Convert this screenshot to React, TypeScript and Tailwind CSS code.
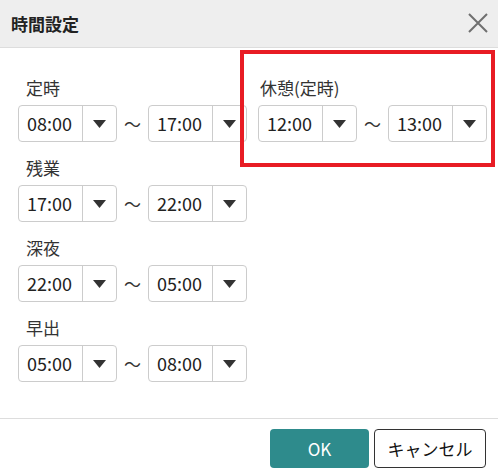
import React from 'react'

const font = { fontFamily: '"Noto Sans CJK JP", "Noto Sans", sans-serif' }

interface Range {
  from: string
  to: string
}

const leftRows: { label: string; range: Range }[] = [
  { label: '定時', range: { from: '08:00', to: '17:00' } },
  { label: '残業', range: { from: '17:00', to: '22:00' } },
  { label: '深夜', range: { from: '22:00', to: '05:00' } },
  { label: '早出', range: { from: '05:00', to: '08:00' } },
]

function TimeSelect({ value }: { value: string }) {
  return (
    <div className="flex h-[37px] w-[99px] items-stretch rounded-[4px] border border-[#cccccc] bg-white">
      <div className="flex w-[63px] items-center pl-[8px] text-[18px] text-[#222]">{value}</div>
      <div className="flex flex-1 items-center justify-center border-l border-[#cccccc]">
        <svg width="13" height="8" viewBox="0 0 13 8">
          <path d="M0 0 L13 0 L6.5 8 Z" fill="#333" />
        </svg>
      </div>
    </div>
  )
}

function RangeRow({ range }: { range: Range }) {
  return (
    <div className="flex items-center">
      <TimeSelect value={range.from} />
      <span className="w-[31px] text-center text-[17px] text-[#333]">〜</span>
      <TimeSelect value={range.to} />
    </div>
  )
}

export default function App() {
  return (
    <div className="relative flex h-[476px] w-[498px] flex-col bg-white" style={font}>
      {/* header */}
      <div className="flex h-[48px] items-center justify-between border-b border-[#dddddd] bg-[#eeeeee] pl-[11px] pr-[10px]">
        <h1 className="text-[17px] font-bold text-[#222]">時間設定</h1>
        <svg width="20" height="20" viewBox="0 0 20 20" className="mb-[1px]">
          <path d="M1 1 L19 19 M19 1 L1 19" stroke="#6f6f6f" strokeWidth="2" />
        </svg>
      </div>

      {/* body */}
      <div className="grid flex-1 grid-cols-[240px_1fr] pl-[18px] pt-[14px]">
        <div>
          {leftRows.map((row) => (
            <div key={row.label} className="pt-[14px]">
              <div className="mb-[5px] h-[24px] pl-[8px] text-[17px] leading-[24px] text-[#333]">{row.label}</div>
              <RangeRow range={row.range} />
            </div>
          ))}
        </div>
        <div>
          <div className="pt-[14px]">
            <div className="mb-[5px] h-[24px] pl-[2px] text-[17px] leading-[24px] text-[#333]">休憩(定時)</div>
            <RangeRow range={{ from: '12:00', to: '13:00' }} />
          </div>
        </div>
      </div>

      {/* footer */}
      <div className="flex h-[58px] justify-end gap-[5px] border-t border-[#dddddd] pr-[12px] pt-[10px]">
        <button className="h-[39px] w-[99px] rounded-[4px] bg-[#2e8b8c] text-[17px] text-white">OK</button>
        <button className="h-[39px] w-[112px] rounded-[4px] border border-[#333] bg-white text-[17px] text-[#111]">
          キャンセル
        </button>
      </div>

      {/* annotation highlight */}
      <div className="pointer-events-none absolute left-[240px] top-[50px] h-[117px] w-[255px] border-[4px] border-[#e81c24]" />
    </div>
  )
}
